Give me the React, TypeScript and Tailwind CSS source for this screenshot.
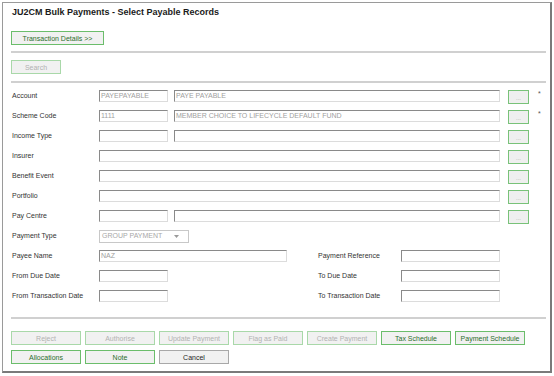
import React from "react";

type Kind = "on" | "off" | "plain";

const kinds: Record<Kind, string> = {
  on: "border-[#6bbd6b] text-[#2c6e2c]",
  off: "border-[#a9d8a9] text-[#b2b2b2]",
  plain: "border-[#a8a8a8] text-[#1f1f1f]",
};

function Btn({ label, kind = "on", className = "w-[70px]" }: { label: string; kind?: Kind; className?: string }) {
  return (
    <div
      className={`${className} h-[14px] flex items-center justify-center border bg-[#f1f1f1] text-[7px] leading-none whitespace-nowrap ${kinds[kind]}`}
    >
      {label}
    </div>
  );
}

// sunken text box, dark on top/left
function Box({ className, value }: { className: string; value?: string }) {
  return (
    <div
      className={`${className} h-[12px] border border-t-[#8a8a8a] border-l-[#8a8a8a] border-r-[#dcdcdc] border-b-[#dcdcdc] bg-white pl-[1px] text-[7px] leading-[10px] text-[#a0a0a0] whitespace-nowrap overflow-hidden`}
    >
      {value}
    </div>
  );
}

function Label({ text }: { text: string }) {
  return <div className="h-[12px] leading-[12px] text-[7px] text-[#333] pl-[1px] whitespace-nowrap">{text}</div>;
}

function Sep() {
  return <div className="h-[2px] bg-[#d0d0d0]" />;
}

const lookupRows = [
  { label: "Account", a: "PAYEPAYABLE", b: "PAYE PAYABLE", req: true, split: true },
  { label: "Scheme Code", a: "1111", b: "MEMBER CHOICE TO LIFECYCLE DEFAULT FUND", req: true, split: true },
  { label: "Income Type", split: true },
  { label: "Insurer" },
  { label: "Benefit Event" },
  { label: "Portfolio" },
  { label: "Pay Centre", split: true },
];

export default function App() {
  return (
    <div className="w-[554px] h-[376px] bg-white pt-[2px] pl-[2px] font-['Liberation_Sans',Arial,sans-serif]">
      <div className="w-[550px] h-[371px] border-t border-l border-r-2 border-b-2 border-t-[#9a9a9a] border-l-[#9a9a9a] border-r-[#7a7a7a] border-b-[#7a7a7a] pl-[8px] pr-[4px]">
        {/* Title */}
        <div className="pt-[4px] pl-[1px] h-[15px] text-[9px] font-bold leading-[11px] text-[#1a1a1a]">
          JU2CM Bulk Payments - Select Payable Records
        </div>

        <div className="mt-[13px]">
          <Btn label="Transaction Details >>" className="w-[93px]" />
        </div>
        <div className="mt-[6px]">
          <Sep />
        </div>
        <div className="mt-[7px]">
          <Btn label="Search" kind="off" className="w-[50px]" />
        </div>
        <div className="mt-[7px]">
          <Sep />
        </div>

        {/* Lookup fields */}
        <div className="mt-[7px]">
          {lookupRows.map((r) => (
            <div key={r.label} className="flex items-start h-[20px]">
              <div className="w-[88px]">
                <Label text={r.label} />
              </div>
              {r.split ? (
                <div className="w-[401px] flex gap-[6px]">
                  <Box className="w-[69px]" value={r.a} />
                  <Box className="flex-1" value={r.b} />
                </div>
              ) : (
                <Box className="w-[401px]" />
              )}
              <div className="ml-[8px] w-[21px] h-[14px] border border-[#79c279] bg-[#efefef] flex items-end justify-center text-[6px] leading-[9px] text-[#a6a6a6]">
                ...
              </div>
              {r.req && <div className="ml-[9px] text-[7px] leading-[8px] text-[#555]">*</div>}
            </div>
          ))}

          {/* Payment type */}
          <div className="flex items-start h-[20px]">
            <div className="w-[88px]">
              <Label text="Payment Type" />
            </div>
            <div className="w-[90px] h-[13px] border border-[#c8c8c8] bg-white flex items-center justify-between pl-[2px] pr-[9px] text-[7px] text-[#a8a8a8]">
              <span>GROUP PAYMENT</span>
              <svg width="5" height="3" viewBox="0 0 5 3">
                <path d="M0 0h5L2.5 3z" fill="#9a9a9a" />
              </svg>
            </div>
          </div>

          {/* Two column rows */}
          {[
            { l: "Payee Name", w: "w-[188px]", v: "NAZ", r: "Payment Reference" },
            { l: "From Due Date", w: "w-[69px]", r: "To Due Date" },
            { l: "From Transaction Date", w: "w-[69px]", r: "To Transaction Date" },
          ].map((row) => (
            <div key={row.l} className="grid grid-cols-[88px_218px_84px_99px] items-start h-[20px]">
              <Label text={row.l} />
              <Box className={row.w} value={row.v} />
              <Label text={row.r} />
              <Box className="w-[99px]" />
            </div>
          ))}
        </div>

        <div className="mt-[7px]">
          <Sep />
        </div>

        {/* Actions */}
        <div className="mt-[12px] flex gap-[4px]">
          <Btn label="Reject" kind="off" />
          <Btn label="Authorise" kind="off" />
          <Btn label="Update Payment" kind="off" />
          <Btn label="Flag as Paid" kind="off" />
          <Btn label="Create Payment" kind="off" />
          <Btn label="Tax Schedule" />
          <Btn label="Payment Schedule" />
        </div>
        <div className="mt-[5px] flex gap-[4px]">
          <Btn label="Allocations" />
          <Btn label="Note" />
          <Btn label="Cancel" kind="plain" />
        </div>
      </div>
    </div>
  );
}
